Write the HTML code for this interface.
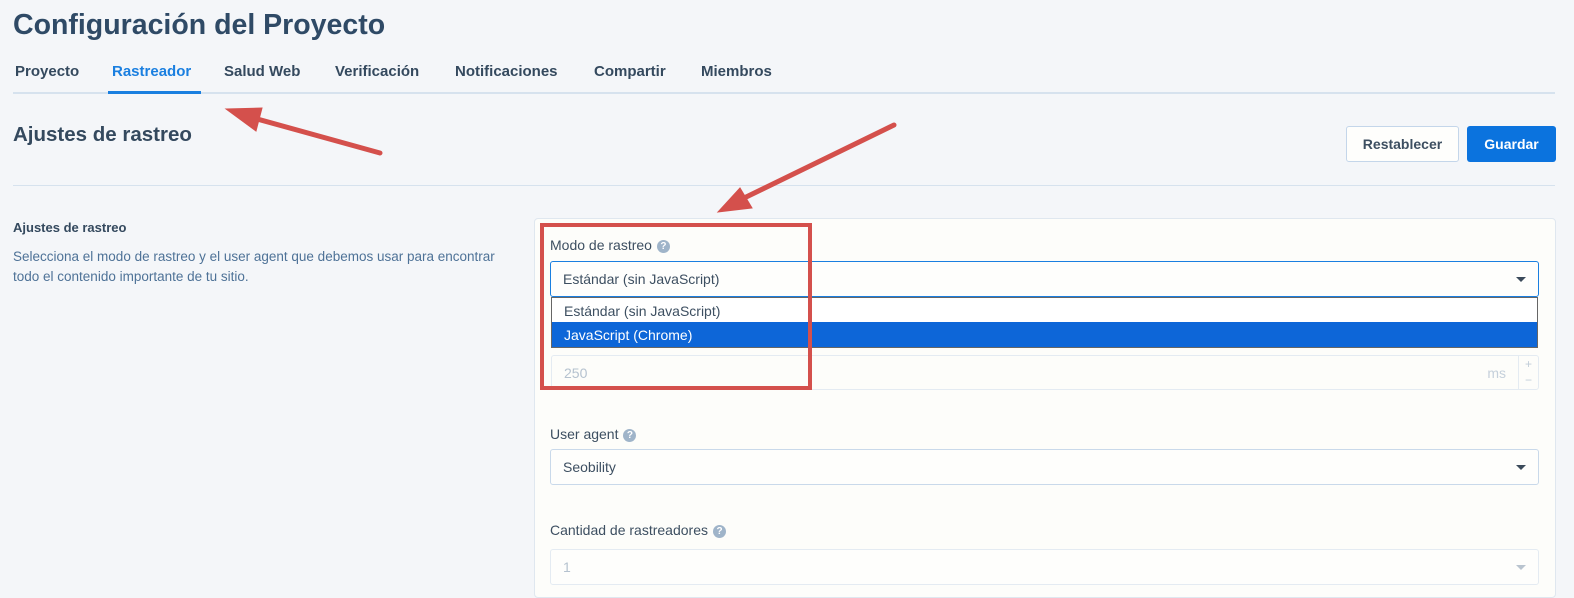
<!DOCTYPE html>
<html><head><meta charset="utf-8"><style>
*{box-sizing:border-box;margin:0;padding:0}
body{width:1574px;height:592px;background:#f4f6f9;font-family:"Liberation Sans",sans-serif;color:#34495e;position:relative;overflow:hidden}
.a{position:absolute;white-space:nowrap}
h1{position:absolute;left:13px;top:9px;font-size:28.5px;font-weight:bold;color:#2f4a66}
.tab{position:absolute;top:63px;font-size:15px;font-weight:bold;color:#34495e}
.sel{position:absolute;background:#fefefc;border:1px solid #c9d9ea;border-radius:3px}
.caret{position:absolute;right:12px;top:50%;margin-top:-2px;border-left:5px solid transparent;border-right:5px solid transparent;border-top:5px solid #3b4a5a}
.lbl{position:absolute;font-size:14px;color:#3d4f61}
.q{display:inline-block;width:13px;height:13px;border-radius:50%;background:#9fb4c9;color:#fff;font-size:10px;font-weight:bold;text-align:center;line-height:13px;vertical-align:1px;margin-left:5px}
</style></head><body>
<h1>Configuración del Proyecto</h1>
<div class="tab" style="left:15px">Proyecto</div>
<div class="tab" style="left:112px;color:#1a7fe0">Rastreador</div>
<div class="tab" style="left:224px">Salud Web</div>
<div class="tab" style="left:335px">Verificación</div>
<div class="tab" style="left:455px">Notificaciones</div>
<div class="tab" style="left:594px">Compartir</div>
<div class="tab" style="left:701px">Miembros</div>
<div class="a" style="left:13px;top:92px;width:1542px;height:2px;background:#d6e2ee"></div>
<div class="a" style="left:108px;top:91px;width:93px;height:3px;background:#1a7fe0"></div>
<div class="a" style="left:13px;top:123px;font-size:20.5px;font-weight:bold;color:#34495e">Ajustes de rastreo</div>
<div class="a" style="left:1346px;top:126px;width:113px;height:36px;border:1px solid #c4d6ea;border-radius:3px;background:#fefefc;font-size:14px;font-weight:bold;text-align:center;line-height:34px;color:#3d4f61">Restablecer</div>
<div class="a" style="left:1467px;top:126px;width:89px;height:36px;border-radius:3px;background:#0b73de;color:#fff;font-size:14px;font-weight:bold;text-align:center;line-height:36px">Guardar</div>
<div class="a" style="left:13px;top:185px;width:1542px;height:1px;background:#d6e2ee"></div>
<div class="a" style="left:13px;top:220px;font-size:13px;font-weight:bold;color:#34495e">Ajustes de rastreo</div>
<div class="a" style="left:13px;top:247px;font-size:13.5px;line-height:20px;color:#4e7297">Selecciona el modo de rastreo y el user agent que debemos usar para encontrar<br>todo el contenido importante de tu sitio.</div>
<div class="a" style="left:534px;top:218px;width:1022px;height:380px;background:#fdfdfa;border:1px solid #dfe7ef;border-radius:4px"></div>
<div class="lbl" style="left:550px;top:237px">Modo de rastreo<span class="q">?</span></div>
<div class="sel" style="left:550px;top:261px;width:989px;height:36px;border:1px solid #1a7fe0;border-radius:3px"><span class="a" style="left:12px;top:9px;font-size:14px;color:#3d4f61">Estándar (sin JavaScript)</span><div class="caret"></div></div>
<div class="a" style="left:551px;top:355px;width:988px;height:35px;border:1px solid #e4ebf2;border-radius:3px;background:#fdfdfa"><span class="a" style="left:12px;top:9px;font-size:14px;color:#b5c2cf">250</span><span class="a" style="right:32px;top:9px;font-size:14px;color:#c5d0db">ms</span><div class="a" style="right:0;top:0;width:20px;height:33px;border-left:1px solid #e4ebf2;color:#c0ccd8;font-size:12px;text-align:center;line-height:16px">+<br>−</div></div>
<div class="a" style="left:551px;top:297px;width:987px;height:51px;background:#fff;border:1px solid #666"><div class="a" style="left:12px;top:5px;font-size:14px;color:#3d4f61">Estándar (sin JavaScript)</div><div class="a" style="left:0;top:24px;width:985px;height:25px;background:#0d66d8"></div><div class="a" style="left:12px;top:29px;font-size:14px;color:#fff">JavaScript (Chrome)</div></div>
<div class="a" style="left:540px;top:223px;width:272px;height:167px;border:4px solid #d4504c"></div>
<div class="lbl" style="left:550px;top:426px">User agent<span class="q">?</span></div>
<div class="sel" style="left:550px;top:449px;width:989px;height:36px"><span class="a" style="left:12px;top:9px;font-size:14px;color:#3d4f61">Seobility</span><div class="caret"></div></div>
<div class="lbl" style="left:550px;top:522px">Cantidad de rastreadores<span class="q">?</span></div>
<div class="sel" style="left:550px;top:549px;width:989px;height:36px;border-color:#e4ebf2"><span class="a" style="left:12px;top:9px;font-size:14px;color:#b5c2cf">1</span><div class="caret" style="border-top-color:#b9c4cf"></div></div>
<svg class="a" style="left:0;top:0" width="1574" height="592">
<g fill="#d4504c" stroke="#d4504c" stroke-width="5" stroke-linecap="round">
<line x1="380" y1="153" x2="250" y2="117"/>
<polygon stroke-width="1" points="226,109 262,108 256,131"/>
<line x1="894" y1="125" x2="740" y2="200"/>
<polygon stroke-width="1" points="718,212 740,188 752,208"/>
</g></svg>
</body></html>
